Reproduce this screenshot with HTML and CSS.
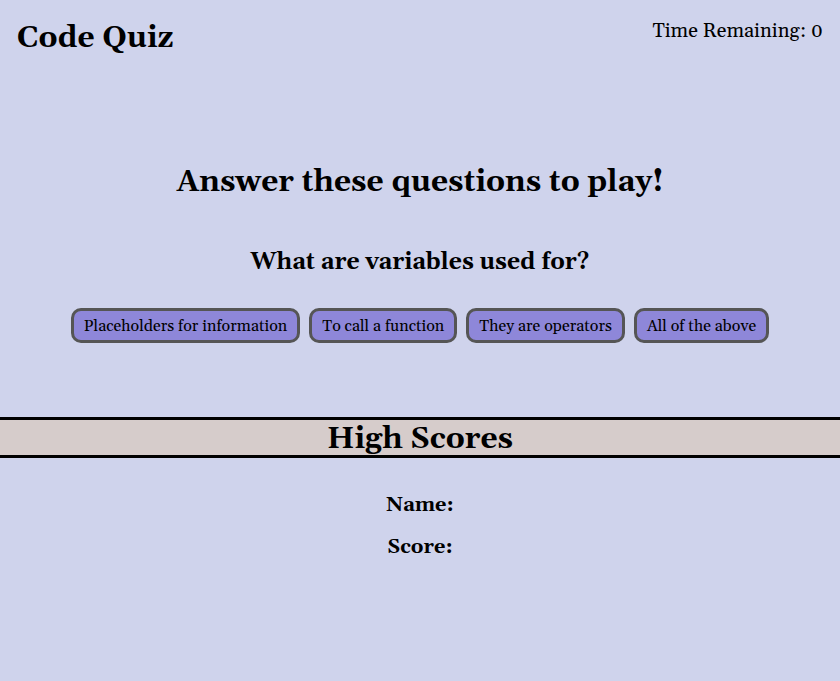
FILE: index.html
```html
<!DOCTYPE html>
<html lang="en">
<head>
<meta charset="utf-8">
<meta name="viewport" content="width=device-width, initial-scale=1">
<title>Code Quiz</title>
<link rel="stylesheet" href="styles.css">
</head>
<body>
<header class="top">
<h1 class="brand">Code Quiz</h1>
<p class="timer">Time Remaining: 0</p>
</header>
<main>
<section class="quiz">
<h2 class="intro">Answer these questions to play!</h2>
<h3 class="question">What are variables used for?</h3>
<div class="answers">
<button class="answer" type="button">Placeholders for information</button>
<button class="answer" type="button">To call a function</button>
<button class="answer" type="button">They are operators</button>
<button class="answer" type="button">All of the above</button>
</div>
</section>
<section class="scores">
<h2 class="scores-title">High Scores</h2>
<h3 class="score-line">Name:</h3>
<h3 class="score-line">Score:</h3>
</section>
</main>
</body>
</html>
```
FILE: styles.css
```css
* {
  box-sizing: border-box;
}

body {
  margin: 0;
  min-height: 100vh;
  background: #cfd3ec;
  color: #000;
  font-family: Georgia, Gelasio, "Liberation Serif", serif;
}

h1, h2, h3, p {
  margin: 0;
}

.top {
  display: flex;
  justify-content: space-between;
  align-items: flex-start;
  padding: 19px 17px 0;
}

.brand,
.intro {
  font-size: 30px;
  line-height: 38px;
}

.timer {
  font-size: 20px;
  line-height: 24px;
}

.quiz {
  padding-top: 106px;
  text-align: center;
}

.question {
  margin-top: 48px;
  font-size: 23px;
  line-height: 28px;
}

.answers {
  display: flex;
  flex-wrap: wrap;
  justify-content: center;
  gap: 9px;
  margin-top: 31px;
}

.answer {
  padding: 6px 10px 4px;
  border: 3px solid #555;
  border-radius: 10px;
  background: #8e87d9;
  color: #000;
  font-family: inherit;
  font-size: 16px;
  line-height: 19px;
}

.scores {
  margin-top: 74px;
  text-align: center;
}

.scores-title {
  padding-top: 3px;
  border: solid #000;
  border-width: 3px 0;
  background: #d6cccb;
  font-size: 30px;
  line-height: 32px;
}

.score-line {
  margin-top: 20px;
  font-size: 20px;
  line-height: 22px;
}

.scores-title + .score-line {
  margin-top: 36px;
}
```
